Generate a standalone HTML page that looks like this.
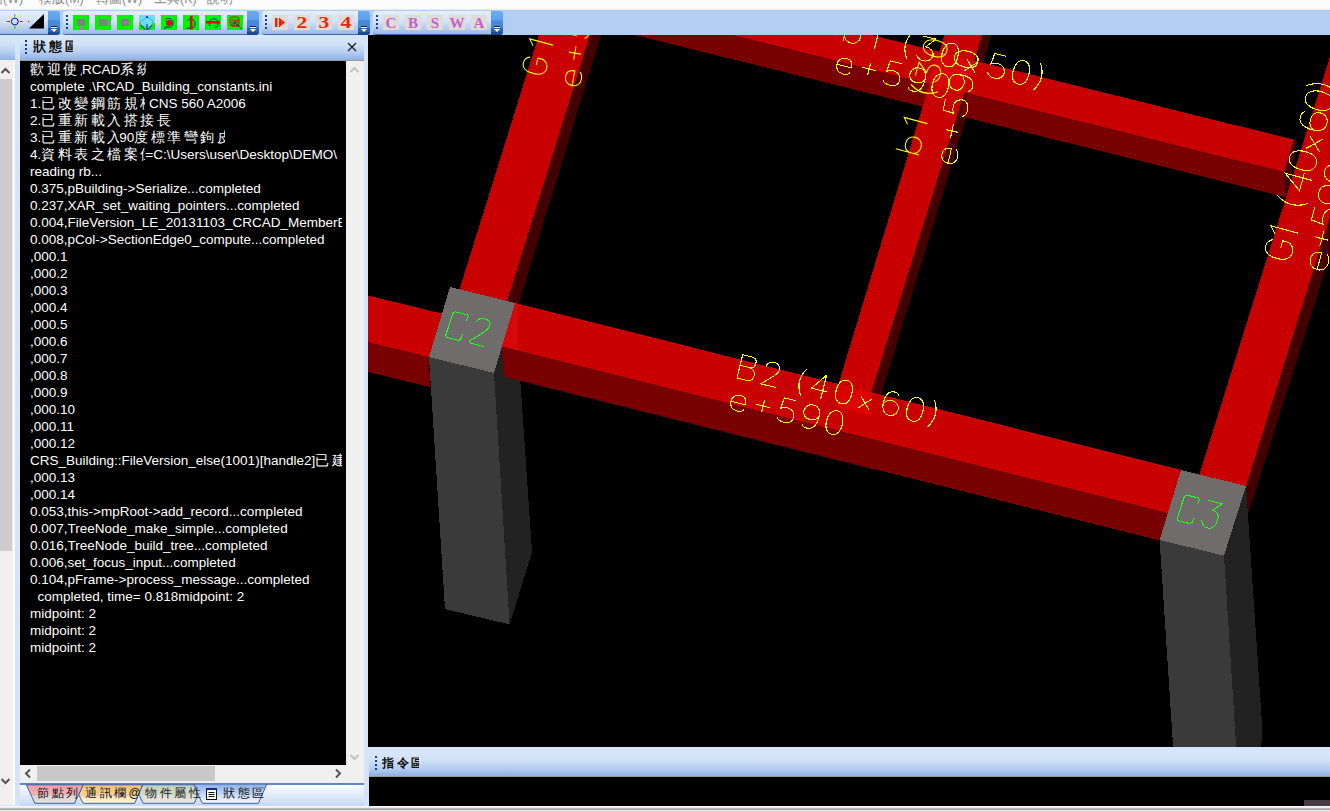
<!DOCTYPE html>
<html><head><meta charset="utf-8">
<style>
*{box-sizing:border-box}
html,body{margin:0;padding:0}
body{width:1330px;height:811px;overflow:hidden;position:relative;background:#d6e4f8;font-family:"Liberation Sans",sans-serif}
.a{position:absolute}
#menubar{left:0;top:0;width:1330px;height:10px;background:#fcfcfc;border-bottom:1px solid #ecebe8;overflow:hidden}
#menubar span{position:absolute;top:-9px;font-size:12.5px;color:#8c8c8c;white-space:nowrap}
#band{left:0;top:10px;width:1330px;height:25px;background:#b4cdf3}
.tb{position:absolute;top:1px;height:24px;border-radius:3px 0 0 3px;background:linear-gradient(#e4eefc 0%,#d2e2f8 45%,#b6cdf0 75%,#9ab8e6 100%);border-bottom:1px solid #3f66a6}
.dd{position:absolute;top:1px;height:24px;width:12px;border-radius:0 3px 3px 0;background:linear-gradient(#6aaaf0 0%,#5ea0ea 38%,#4a8cdc 40%,#4688d8 68%,#2a66b6 70%,#2a62b0 88%,#1a4890 90%,#1a4890 100%)}
.dd:after{content:"";position:absolute;left:3px;top:16px;width:6px;height:1px;background:#fff;box-shadow:0 -1px 0 0 #102040}
.dd i{position:absolute;left:3px;top:18px;width:0;height:0;border-left:3px solid transparent;border-right:3px solid transparent;border-top:3px solid #fff}
.grip{position:absolute;top:5px;width:2px;height:15px;background:repeating-linear-gradient(#1a3f8a 0 2px,transparent 2px 4px)}
.ic{position:absolute;top:4px;width:16px;height:15px}
.gb{background:#00f800}
.gy{background:#dcdcdc;font-family:"Liberation Serif",serif;font-weight:bold;text-align:center;line-height:15px;font-size:16px}
.hdr{background:linear-gradient(#d8e6f9 0%,#d2e2f8 35%,#b4cdf0 70%,#8eb2e6 100%)}
.grip2{width:2px;height:15px;background:repeating-linear-gradient(#1a3f8a 0 2px,transparent 2px 4px)}
.ln{height:17px;line-height:17px;font-size:13.5px;color:#fff;white-space:pre}
.cj{display:inline-block;overflow:hidden;vertical-align:top;white-space:nowrap;font-size:14px;letter-spacing:2.5px}
.tabt{font-size:12px;line-height:15px;color:#111;white-space:nowrap;letter-spacing:2.5px}
.dig{width:16px;height:15px;text-align:center;font-family:"Liberation Serif",serif;font-weight:bold;font-size:16px;line-height:16px;color:#f02400;transform:scaleX(1.35)}
.let{width:16px;height:15px;text-align:center;font-family:"Liberation Serif",serif;font-weight:bold;font-size:15px;line-height:16px;color:#c860c8}
</style></head><body>

<div id="menubar" class="a">
<span style="left:-10px">圖(W)</span>
<span style="left:39px">模版(M)</span>
<span style="left:96px">轉圖(W)</span>
<span style="left:154px">工具(K)</span>
<span style="left:207px">說明</span>
</div>

<div id="band" class="a">
  <!-- toolbar 1 -->
  <div class="tb" style="left:0;width:49px;border-radius:0"></div>
  <div class="dd" style="left:48px"><i></i></div>
  <!-- toolbar 2 -->
  <div class="tb" style="left:63px;width:185px"></div>
  <div class="dd" style="left:247px"><i></i></div>
  <div class="grip" style="left:66px"></div>
  <!-- toolbar 3 -->
  <div class="tb" style="left:262px;width:97px"></div>
  <div class="dd" style="left:358px"><i></i></div>
  <div class="grip" style="left:265px"></div>
  <!-- toolbar 4 -->
  <div class="tb" style="left:373px;width:119px"></div>
  <div class="dd" style="left:491px"><i></i></div>
  <div class="grip" style="left:376px"></div>

  <!-- tb1 icons -->
  <svg class="a" style="left:5px;top:0px" width="40" height="21">
   <circle cx="9.8" cy="11.5" r="3.4" fill="none" stroke="#0000e0" stroke-width="1"/>
   <path d="M9.8,4V7M9.8,16V19" stroke="#00d000" stroke-width="1"/>
   <path d="M2,11.5H5M14.5,11.5H17.5" stroke="#f00000" stroke-width="1"/>
   <path d="M3.8,5.5L6.8,8.5M15.8,5.5L12.8,8.5M3.8,17.5L6.8,14.5M15.8,17.5L12.8,14.5" stroke="#f0e000" stroke-width="1"/>
   <rect x="23" y="11" width="1.2" height="1.2" fill="#e00000"/>
   <polygon points="24,18.5 39,4 39,18.5" fill="#000"/>
  </svg>
  <!-- tb2 icons -->
  <svg class="a" style="left:73px;top:5px" width="172" height="15">
   <g>
    <rect x="0" y="0" width="16" height="15" fill="#00f400"/>
    <rect x="4" y="4" width="8" height="7" fill="#808080"/><rect x="7" y="12" width="3" height="3" fill="#d060d0"/>
   </g>
   <g transform="translate(22,0)">
    <rect x="0" y="0" width="16" height="15" fill="#00f400"/>
    <rect x="4" y="4" width="8" height="7" fill="#808080"/><circle cx="14" cy="8" r="1.8" fill="#d060d0"/>
   </g>
   <g transform="translate(44,0)">
    <rect x="0" y="0" width="16" height="15" fill="#00f400"/>
    <rect x="4" y="4" width="8" height="7" fill="#808080"/><circle cx="8" cy="7.5" r="1.5" fill="#d060d0"/>
   </g>
   <g transform="translate(66,0)">
    <rect x="0" y="0" width="16" height="15" fill="#00f400"/>
    <rect x="0" y="0" width="16" height="8" fill="#60e4f4"/>
    <path d="M1,7 L8,2 L14,6 L13,10 L8,13 L2,10 Z" fill="#60e4f4" stroke="#909090" stroke-width="0.9"/>
    <path d="M2,10 L6,15 M8,9 L8,15 M13,10 L9,15" stroke="#0010c0" stroke-width="1"/>
    <rect x="7" y="1.5" width="2" height="1.5" fill="#0010c0"/>
   </g>
   <g transform="translate(88,0)">
    <rect x="0" y="0" width="16" height="15" fill="#00f400"/>
    <path d="M4,5 A4.5,4.5 0 1 1 6,12 L4,12 L4,14" fill="none" stroke="#0018c0" stroke-width="1"/>
    <circle cx="8" cy="8" r="3" fill="#f00000"/>
   </g>
   <g transform="translate(110,0)">
    <rect x="0" y="0" width="16" height="15" fill="#00f400"/>
    <path d="M4,6 A4.5,4.5 0 1 1 7,13 L4,13 L4,14" fill="none" stroke="#0018c0" stroke-width="1"/>
    <rect x="7" y="1" width="2.5" height="13.5" fill="#f00000"/>
   </g>
   <g transform="translate(132,0)">
    <rect x="0" y="0" width="16" height="15" fill="#00f400"/>
    <path d="M5,11 A4.5,4.5 0 1 1 13,9 L12,12 L10,12" fill="none" stroke="#0018c0" stroke-width="1"/>
    <rect x="1" y="6" width="14" height="2.5" fill="#f00000"/>
   </g>
   <g transform="translate(154,0)">
    <rect x="0" y="0" width="16" height="15" fill="#00f400"/>
    <rect x="3" y="2" width="9" height="9" rx="2" fill="none" stroke="#f00000" stroke-width="1"/>
    <rect x="5" y="5" width="6" height="6" fill="none" stroke="#f00000" stroke-width="1"/>
    <path d="M7,7 L15,14 M7,7 L7,10 M7,7 L10,7" stroke="#0018c0" stroke-width="1"/>
   </g>
  </svg>
  <!-- tb3 icons -->
  <svg class="a" style="left:272px;top:5px" width="84" height="15">
   <rect x="0" y="0" width="16" height="15" fill="#dedbd8"/>
   <rect x="3" y="3" width="2.5" height="9" fill="#f02000"/><polygon points="7,2.5 13,7.5 7,12.5" fill="#f02000"/>
   <rect x="22" y="0" width="16" height="15" fill="#dedbd8"/>
   <rect x="44" y="0" width="16" height="15" fill="#dedbd8"/>
   <rect x="66" y="0" width="16" height="15" fill="#dedbd8"/>
  </svg>
  <div class="a dig" style="left:294px;top:5px">2</div>
  <div class="a dig" style="left:316px;top:5px">3</div>
  <div class="a dig" style="left:338px;top:5px">4</div>
  <!-- tb4 icons -->
  <svg class="a" style="left:383px;top:5px" width="104" height="15">
   <rect x="0" y="0" width="16" height="15" fill="#dedbd8"/>
   <rect x="22" y="0" width="16" height="15" fill="#dedbd8"/>
   <rect x="44" y="0" width="16" height="15" fill="#dedbd8"/>
   <rect x="66" y="0" width="16" height="15" fill="#dedbd8"/>
   <rect x="88" y="0" width="16" height="15" fill="#dedbd8"/>
  </svg>
  <div class="a let" style="left:383px;top:5px">C</div>
  <div class="a let" style="left:405px;top:5px">B</div>
  <div class="a let" style="left:427px;top:5px">S</div>
  <div class="a let" style="left:449px;top:5px">W</div>
  <div class="a let" style="left:471px;top:5px">A</div>
</div>

<!-- left dock -->
<div id="dock" class="a" style="left:0;top:35px;width:368px;height:771px;background:#d6e4f8"></div>

<!-- left collapsed panel -->
<div class="a hdr" style="left:0;top:35px;width:15px;height:25px"></div>
<div class="a" style="left:0;top:60px;width:13px;height:745px;background:#f0f0f0"></div>
<div class="a" style="left:0;top:79px;width:12px;height:472px;background:#cdcdcd"></div>
<div class="a" style="left:13px;top:60px;width:2px;height:745px;background:#fbfbfb"></div>
<svg class="a" style="left:0px;top:67px" width="11" height="8"><path d="M1.5,6 L5.5,2 L9.5,6" stroke="#555" stroke-width="2" fill="none"/></svg>
<svg class="a" style="left:0px;top:777px" width="11" height="8"><path d="M1.5,2 L5.5,6 L9.5,2" stroke="#555" stroke-width="2" fill="none"/></svg>

<!-- status panel -->
<div class="a hdr" style="left:20px;top:35px;width:344px;height:26px;border-bottom:1px solid #9a9a9a"></div>
<div class="a grip2" style="left:25px;top:40px"></div>
<div class="a" style="left:33px;top:39px;font-size:13px;font-weight:bold;color:#111;line-height:16px;letter-spacing:3px;width:40px;overflow:hidden;white-space:nowrap">狀態區</div>
<svg class="a" style="left:347px;top:42px" width="10" height="10"><path d="M1,1 L9,9 M9,1 L1,9" stroke="#222" stroke-width="1.4"/></svg>
<div class="a" id="con" style="left:20px;top:61px;width:326px;height:704px;background:#000;overflow:hidden">
<div style="position:absolute;left:10px;top:0;width:312px;overflow:hidden;padding-top:0">
<div class="ln"><span class="cj" style="width:52px">歡迎使用</span>RCAD<span class="cj" style="width:26px">系統</span></div>
<div class="ln">complete&#32;.\RCAD_Building_constants.ini</div>
<div class="ln">1.<span class="cj" style="width:104px">已改變鋼筋規格為</span>&#32;CNS&#32;560&#32;A2006</div>
<div class="ln">2.<span class="cj" style="width:130px">已重新載入搭接長度表</span></div>
<div class="ln">3.<span class="cj" style="width:78px">已重新載入梁</span>90<span class="cj" style="width:91px">度標準彎鉤皮長</span></div>
<div class="ln">4.<span class="cj" style="width:104px">資料表之檔案位置</span>=C:\Users\user\Desktop\DEMO\</div>
<div class="ln">reading&#32;rb...</div>
<div class="ln">0.375,pBuilding-&gt;Serialize...completed</div>
<div class="ln">0.237,XAR_set_waiting_pointers...completed</div>
<div class="ln">0.004,FileVersion_LE_20131103_CRCAD_MemberB</div>
<div class="ln">0.008,pCol-&gt;SectionEdge0_compute...completed</div>
<div class="ln">,000.1</div>
<div class="ln">,000.2</div>
<div class="ln">,000.3</div>
<div class="ln">,000.4</div>
<div class="ln">,000.5</div>
<div class="ln">,000.6</div>
<div class="ln">,000.7</div>
<div class="ln">,000.8</div>
<div class="ln">,000.9</div>
<div class="ln">,000.10</div>
<div class="ln">,000.11</div>
<div class="ln">,000.12</div>
<div class="ln">CRS_Building::FileVersion_else(1001)[handle2]<span class="cj" style="width:39px">已建構</span></div>
<div class="ln">,000.13</div>
<div class="ln">,000.14</div>
<div class="ln">0.053,this-&gt;mpRoot-&gt;add_record...completed</div>
<div class="ln">0.007,TreeNode_make_simple...completed</div>
<div class="ln">0.016,TreeNode_build_tree...completed</div>
<div class="ln">0.006,set_focus_input...completed</div>
<div class="ln">0.104,pFrame-&gt;process_message...completed</div>
<div class="ln">&#32;&#32;completed,&#32;time=&#32;0.818midpoint:&#32;2</div>
<div class="ln">midpoint:&#32;2</div>
<div class="ln">midpoint:&#32;2</div>
<div class="ln">midpoint:&#32;2</div>
</div></div>
<div class="a" style="left:346px;top:61px;width:18px;height:704px;background:#f0f0f0"></div>
<svg class="a" style="left:349px;top:66px" width="11" height="8"><path d="M1.5,6 L5.5,2 L9.5,6" stroke="#c8c3c3" stroke-width="2" fill="none"/></svg>
<svg class="a" style="left:349px;top:753px" width="11" height="8"><path d="M1.5,2 L5.5,6 L9.5,2" stroke="#c8c3c3" stroke-width="2" fill="none"/></svg>
<div class="a" style="left:20px;top:765px;width:344px;height:18px;background:#f0f0f0"></div>
<div class="a" style="left:37px;top:766px;width:178px;height:15px;background:#c8c8c8"></div>
<svg class="a" style="left:24px;top:768px" width="8" height="11"><path d="M6,1.5 L2,5.5 L6,9.5" stroke="#555" stroke-width="2" fill="none"/></svg>
<svg class="a" style="left:334px;top:768px" width="8" height="11"><path d="M2,1.5 L6,5.5 L2,9.5" stroke="#555" stroke-width="2" fill="none"/></svg>
<!-- tab strip -->
<div class="a" style="left:20px;top:783px;width:344px;height:23px;background:linear-gradient(#ffffff,#c6d9f4)"></div>
<div class="a" style="left:20px;top:783px;width:344px;height:2px;background:#4a7ac8;opacity:.9"></div>
<svg class="a" style="left:20px;top:784px" width="344" height="22">
<defs>
<linearGradient id="tp" x1="0" y1="0" x2="0" y2="1"><stop offset="0" stop-color="#f19ea6"/><stop offset="0.55" stop-color="#ecb4b4"/><stop offset="0.62" stop-color="#ded6d6"/><stop offset="1" stop-color="#e4dede"/></linearGradient>
<linearGradient id="to" x1="0" y1="0" x2="0" y2="1"><stop offset="0" stop-color="#f4c07a"/><stop offset="0.5" stop-color="#f6d090"/><stop offset="0.58" stop-color="#f0c8c0"/><stop offset="0.66" stop-color="#fde9ba"/><stop offset="1" stop-color="#fff5cf"/></linearGradient>
<linearGradient id="tg" x1="0" y1="0" x2="0" y2="1"><stop offset="0" stop-color="#c6d2bd"/><stop offset="0.55" stop-color="#d2dac8"/><stop offset="0.62" stop-color="#e2e0d8"/><stop offset="1" stop-color="#e8e8e0"/></linearGradient>
<linearGradient id="tb2" x1="0" y1="0" x2="0" y2="1"><stop offset="0" stop-color="#8aaee6"/><stop offset="0.5" stop-color="#c0d6f4"/><stop offset="1" stop-color="#f8fbff"/></linearGradient>
</defs>
<polygon points="174.2,0 246.8,0 238.4,19.3 182.6,19.3 177.9,10.8" fill="url(#tb2)" stroke="#3a62a8" stroke-width="1"/>
<polygon points="122.6,0.8 174.2,0.8 177.9,10.8 174.2,19.3 123.2,19.3 118.4,9.8" fill="url(#tg)" stroke="#3a62a8" stroke-width="1"/>
<polygon points="63.2,0.8 122.6,0.8 114.7,19.3 63.2,19.3 58.6,10.5" fill="url(#to)" stroke="#3a62a8" stroke-width="1"/>
<polygon points="6.3,0.8 63.2,0.8 54.6,19.3 14.9,19.3" fill="url(#tp)" stroke="#3a62a8" stroke-width="1"/>
</svg>
<div class="a tabt" style="left:37px;top:786px">節點列</div>
<div class="a tabt" style="left:85px;top:786px">通訊欄@</div>
<div class="a tabt" style="left:145px;top:786px;color:#222">物件屬性</div>
<svg class="a" style="left:206px;top:788px" width="11" height="12"><rect x="0.5" y="0.5" width="10" height="11" fill="#fff" stroke="#111"/><rect x="0" y="0" width="11" height="2" fill="#1a2a80"/><path d="M2.5,4.5H8.5M2.5,6.5H8.5M2.5,8.5H8.5" stroke="#111"/></svg>
<div class="a tabt" style="left:223px;top:786px">狀態區</div>

<!-- 3D view -->
<svg class="a" style="left:368px;top:35px" width="962" height="712" viewBox="368 35 962 712" shape-rendering="crispEdges">
<rect x="368" y="35" width="962" height="712" fill="#000"/>
<!-- b1v dark -->
<polygon fill="#420000" points="983.5,30 993,30 879.4,400 868.85,400"/>
<!-- top beam dark -->
<polygon fill="#780000" points="724,32.7 1283.9,171.8 1285.1,197 630,33.7"/>
<polygon fill="#420000" points="964.95,88 969,88 960,118 956.3,118"/>
<!-- top beam red -->
<polygon fill="#c80000" points="860,32.2 1293.8,139.7 1283.9,171.8 724,32.7"/>
<!-- top beam end face -->
<polygon fill="#420000" points="1293.8,139.7 1297,141 1287,197 1285.1,197 1283.9,171.8"/>
<!-- b1v red -->
<polygon fill="#c80000" points="946,30 983.5,30 868.85,400 833.7,400"/>
<!-- G1 left -->
<polygon fill="#420000" points="591.4,30 602.4,30 516.8,310 504.3,310"/>
<polygon fill="#c80000" points="540.5,30 591.4,30 504.3,310 456.2,300"/>
<!-- B2 left -->
<polygon fill="#c80000" points="360,293.6 442,313.6 429,357 360,340"/>
<polygon fill="#780000" points="360,340 429,357 430,387 360,370"/>
<!-- G1 right -->
<polygon fill="#420000" points="1388,30 1401.4,30 1248,514 1246,486"/>
<polygon fill="#c80000" points="1338.4,30 1388,30 1244.8,490 1197.7,480"/>
<!-- C2 right face -->
<polygon fill="#222222" points="494,373 515,303 532,552 509.6,624.4"/>
<!-- B2 right -->
<polygon fill="#c80000" points="515,303 1181,470 1168,513 501.6,346.4"/>
<polygon fill="#780000" points="501.6,346.4 1168,513 1160,540.5 504,376.8"/>
<!-- C2 top & front -->
<polygon fill="#716c6c" points="450,287 515,303 494,373 429,357"/>
<polygon fill="#3a3a3a" points="429,357 494,373 509.6,624.4 445,609"/>
<!-- C3 -->
<polygon fill="#222222" points="1224,555.6 1246,486 1262,724 1261,760 1237,760"/>
<polygon fill="#3a3a3a" points="1159.6,540 1224,555.6 1237,760 1174,760"/>
<polygon fill="#716c6c" points="1181,470 1246,486 1224,555.6 1159.6,540"/>
<!-- z-fight patches -->
<polygon fill="#d80606" points="939.2,51.9 974.1,60.5 964,93.2 928.6,84.4"/>
<polygon fill="#dc0000" points="835.9,383.3 871.1,392.2 871.8,415.9 836.7,407"/>
<polygon fill="#d40808" points="515,303 518,304 518,350 502,346"/>
<!--LABELS-->
<g transform="translate(737.0,378.0) rotate(13.8) scale(1.000)" fill="none" stroke="#ffff00" stroke-width="1.00" shape-rendering="crispEdges"><path transform="translate(0.0,0) scale(1.15,1)" d="M0,0 L0,-24 L8,-24 C11,-24 13,-22 13,-18.5 C13,-15 11,-13 8,-13 L0,-13 M8,-13 C12,-13 14,-10 14,-6.5 C14,-2.5 12,0 8,0 L0,0"/><path transform="translate(24.4,0) scale(1.15,1)" d="M1,-18 C1,-22 4,-24 7,-24 C11,-24 13,-21 13,-18 C13,-14 9,-10 0,0 L14,0"/><path transform="translate(56.8,0) scale(1.15,1)" d="M8,-26 Q0,-12 8,2"/><path transform="translate(74.8,0) scale(1.15,1)" d="M10,0 L10,-24 L0,-8 L14,-8"/><path transform="translate(99.2,0) scale(1.15,1)" d="M7,-24 C2,-24 0,-18 0,-12 C0,-5 2,0 7,0 C12,0 14,-5 14,-12 C14,-18 12,-24 7,-24 Z"/><path transform="translate(123.6,0) scale(1.15,1)" d="M1,-12 L11,0 M11,-12 L1,0"/><path transform="translate(148.0,0) scale(1.15,1)" d="M12,-21 C11,-23 9,-24 7,-24 C2,-24 0,-18 0,-11 C0,-4 3,0 7,0 C11,0 14,-3 14,-8 C14,-12 11,-15 7,-15 C3,-15 0,-12 0,-8"/><path transform="translate(172.4,0) scale(1.15,1)" d="M7,-24 C2,-24 0,-18 0,-12 C0,-5 2,0 7,0 C12,0 14,-5 14,-12 C14,-18 12,-24 7,-24 Z"/><path transform="translate(196.8,0) scale(1.15,1)" d="M0,-26 Q8,-12 0,2"/></g>
<g transform="translate(729.0,409.0) rotate(13.8) scale(1.000)" fill="none" stroke="#ffff00" stroke-width="1.00" shape-rendering="crispEdges"><path transform="translate(0.0,0) scale(1.15,1)" d="M0,-8 L13,-8 C13,-13 11,-16 7,-16 C3,-16 0,-13 0,-8 C0,-3 3,0 7,0 C10,0 12,-1 13,-3"/><path transform="translate(24.4,0) scale(1.15,1)" d="M7,-17 L7,-5 M1,-11 L13,-11"/><path transform="translate(48.8,0) scale(1.15,1)" d="M12,-24 L2,-24 L1,-13 C3,-15 5,-15 7,-15 C11,-15 14,-12 14,-7 C14,-3 11,0 7,0 C4,0 1,-1 0,-4"/><path transform="translate(73.2,0) scale(1.15,1)" d="M14,-16 C14,-12 11,-9 7,-9 C3,-9 0,-12 0,-16 C0,-21 3,-24 7,-24 C11,-24 14,-21 14,-14 C14,-5 11,0 6,0 C4,0 2,-1 1,-3"/><path transform="translate(97.6,0) scale(1.15,1)" d="M7,-24 C2,-24 0,-18 0,-12 C0,-5 2,0 7,0 C12,0 14,-5 14,-12 C14,-18 12,-24 7,-24 Z"/></g>
<g transform="translate(843.0,41.0) rotate(13.8) scale(1.000)" fill="none" stroke="#ffff00" stroke-width="1.00" shape-rendering="crispEdges"><path transform="translate(0.0,0) scale(1.15,1)" d="M0,-24 L0,0 M0,-10 C1,-14 4,-16 7,-16 C11,-16 14,-13 14,-8 C14,-3 11,0 7,0 C4,0 1,-2 0,-6"/><path transform="translate(24.4,0) scale(1.15,1)" d="M2,-19 L7,-24 L7,0"/><path transform="translate(56.8,0) scale(1.15,1)" d="M8,-26 Q0,-12 8,2"/><path transform="translate(74.8,0) scale(1.15,1)" d="M1,-24 L13,-24 L6,-14 C10,-14 14,-12 14,-7 C14,-2 10,0 7,0 C3,0 1,-2 0,-4"/><path transform="translate(99.2,0) scale(1.15,1)" d="M7,-24 C2,-24 0,-18 0,-12 C0,-5 2,0 7,0 C12,0 14,-5 14,-12 C14,-18 12,-24 7,-24 Z"/><path transform="translate(123.6,0) scale(1.15,1)" d="M1,-12 L11,0 M11,-12 L1,0"/><path transform="translate(148.0,0) scale(1.15,1)" d="M12,-24 L2,-24 L1,-13 C3,-15 5,-15 7,-15 C11,-15 14,-12 14,-7 C14,-3 11,0 7,0 C4,0 1,-1 0,-4"/><path transform="translate(172.4,0) scale(1.15,1)" d="M7,-24 C2,-24 0,-18 0,-12 C0,-5 2,0 7,0 C12,0 14,-5 14,-12 C14,-18 12,-24 7,-24 Z"/><path transform="translate(196.8,0) scale(1.15,1)" d="M0,-26 Q8,-12 0,2"/></g>
<g transform="translate(835.0,72.0) rotate(13.8) scale(1.000)" fill="none" stroke="#ffff00" stroke-width="1.00" shape-rendering="crispEdges"><path transform="translate(0.0,0) scale(1.15,1)" d="M0,-8 L13,-8 C13,-13 11,-16 7,-16 C3,-16 0,-13 0,-8 C0,-3 3,0 7,0 C10,0 12,-1 13,-3"/><path transform="translate(24.4,0) scale(1.15,1)" d="M7,-17 L7,-5 M1,-11 L13,-11"/><path transform="translate(48.8,0) scale(1.15,1)" d="M12,-24 L2,-24 L1,-13 C3,-15 5,-15 7,-15 C11,-15 14,-12 14,-7 C14,-3 11,0 7,0 C4,0 1,-1 0,-4"/><path transform="translate(73.2,0) scale(1.15,1)" d="M14,-16 C14,-12 11,-9 7,-9 C3,-9 0,-12 0,-16 C0,-21 3,-24 7,-24 C11,-24 14,-21 14,-14 C14,-5 11,0 6,0 C4,0 2,-1 1,-3"/><path transform="translate(97.6,0) scale(1.15,1)" d="M7,-24 C2,-24 0,-18 0,-12 C0,-5 2,0 7,0 C12,0 14,-5 14,-12 C14,-18 12,-24 7,-24 Z"/></g>
<g transform="translate(919.0,155.0) rotate(-75.0) scale(1.000)" fill="none" stroke="#ffff00" stroke-width="1.00" shape-rendering="crispEdges"><path transform="translate(0.0,0) scale(1.15,1)" d="M0,-24 L0,0 M0,-10 C1,-14 4,-16 7,-16 C11,-16 14,-13 14,-8 C14,-3 11,0 7,0 C4,0 1,-2 0,-6"/><path transform="translate(24.4,0) scale(1.15,1)" d="M2,-19 L7,-24 L7,0"/><path transform="translate(56.8,0) scale(1.15,1)" d="M8,-26 Q0,-12 8,2"/><path transform="translate(74.8,0) scale(1.15,1)" d="M1,-24 L13,-24 L6,-14 C10,-14 14,-12 14,-7 C14,-2 10,0 7,0 C3,0 1,-2 0,-4"/><path transform="translate(99.2,0) scale(1.15,1)" d="M7,-24 C2,-24 0,-18 0,-12 C0,-5 2,0 7,0 C12,0 14,-5 14,-12 C14,-18 12,-24 7,-24 Z"/><path transform="translate(123.6,0) scale(1.15,1)" d="M1,-12 L11,0 M11,-12 L1,0"/><path transform="translate(148.0,0) scale(1.15,1)" d="M12,-24 L2,-24 L1,-13 C3,-15 5,-15 7,-15 C11,-15 14,-12 14,-7 C14,-3 11,0 7,0 C4,0 1,-1 0,-4"/><path transform="translate(172.4,0) scale(1.15,1)" d="M7,-24 C2,-24 0,-18 0,-12 C0,-5 2,0 7,0 C12,0 14,-5 14,-12 C14,-18 12,-24 7,-24 Z"/><path transform="translate(196.8,0) scale(1.15,1)" d="M0,-26 Q8,-12 0,2"/></g>
<g transform="translate(956.0,165.0) rotate(-78.0) scale(1.000)" fill="none" stroke="#ffff00" stroke-width="1.00" shape-rendering="crispEdges"><path transform="translate(0.0,0) scale(1.15,1)" d="M0,-8 L13,-8 C13,-13 11,-16 7,-16 C3,-16 0,-13 0,-8 C0,-3 3,0 7,0 C10,0 12,-1 13,-3"/><path transform="translate(24.4,0) scale(1.15,1)" d="M7,-17 L7,-5 M1,-11 L13,-11"/><path transform="translate(48.8,0) scale(1.15,1)" d="M12,-24 L2,-24 L1,-13 C3,-15 5,-15 7,-15 C11,-15 14,-12 14,-7 C14,-3 11,0 7,0 C4,0 1,-1 0,-4"/><path transform="translate(73.2,0) scale(1.15,1)" d="M14,-16 C14,-12 11,-9 7,-9 C3,-9 0,-12 0,-16 C0,-21 3,-24 7,-24 C11,-24 14,-21 14,-14 C14,-5 11,0 6,0 C4,0 2,-1 1,-3"/><path transform="translate(97.6,0) scale(1.15,1)" d="M7,-24 C2,-24 0,-18 0,-12 C0,-5 2,0 7,0 C12,0 14,-5 14,-12 C14,-18 12,-24 7,-24 Z"/></g>
<g transform="translate(544.5,76.5) rotate(-75.0) scale(1.000)" fill="none" stroke="#ffff00" stroke-width="1.00" shape-rendering="crispEdges"><path transform="translate(0.0,0) scale(1.15,1)" d="M13,-19 C12,-22 10,-24 7,-24 C3,-24 0,-20 0,-12 C0,-4 3,0 7,0 C11,0 13,-2 14,-6 L14,-11 L8,-11"/><path transform="translate(24.4,0) scale(1.15,1)" d="M2,-19 L7,-24 L7,0"/><path transform="translate(56.8,0) scale(1.15,1)" d="M8,-26 Q0,-12 8,2"/><path transform="translate(74.8,0) scale(1.15,1)" d="M10,0 L10,-24 L0,-8 L14,-8"/><path transform="translate(99.2,0) scale(1.15,1)" d="M7,-24 C2,-24 0,-18 0,-12 C0,-5 2,0 7,0 C12,0 14,-5 14,-12 C14,-18 12,-24 7,-24 Z"/><path transform="translate(123.6,0) scale(1.15,1)" d="M1,-12 L11,0 M11,-12 L1,0"/><path transform="translate(148.0,0) scale(1.15,1)" d="M12,-21 C11,-23 9,-24 7,-24 C2,-24 0,-18 0,-11 C0,-4 3,0 7,0 C11,0 14,-3 14,-8 C14,-12 11,-15 7,-15 C3,-15 0,-12 0,-8"/><path transform="translate(172.4,0) scale(1.15,1)" d="M7,-24 C2,-24 0,-18 0,-12 C0,-5 2,0 7,0 C12,0 14,-5 14,-12 C14,-18 12,-24 7,-24 Z"/><path transform="translate(196.8,0) scale(1.15,1)" d="M0,-26 Q8,-12 0,2"/></g>
<g transform="translate(580.0,87.0) rotate(-80.0) scale(1.000)" fill="none" stroke="#ffff00" stroke-width="1.00" shape-rendering="crispEdges"><path transform="translate(0.0,0) scale(1.15,1)" d="M0,-8 L13,-8 C13,-13 11,-16 7,-16 C3,-16 0,-13 0,-8 C0,-3 3,0 7,0 C10,0 12,-1 13,-3"/><path transform="translate(24.4,0) scale(1.15,1)" d="M7,-17 L7,-5 M1,-11 L13,-11"/><path transform="translate(48.8,0) scale(1.15,1)" d="M12,-24 L2,-24 L1,-13 C3,-15 5,-15 7,-15 C11,-15 14,-12 14,-7 C14,-3 11,0 7,0 C4,0 1,-1 0,-4"/><path transform="translate(73.2,0) scale(1.15,1)" d="M14,-16 C14,-12 11,-9 7,-9 C3,-9 0,-12 0,-16 C0,-21 3,-24 7,-24 C11,-24 14,-21 14,-14 C14,-5 11,0 6,0 C4,0 2,-1 1,-3"/><path transform="translate(97.6,0) scale(1.15,1)" d="M7,-24 C2,-24 0,-18 0,-12 C0,-5 2,0 7,0 C12,0 14,-5 14,-12 C14,-18 12,-24 7,-24 Z"/></g>
<g transform="translate(1290.0,262.0) rotate(-75.0) scale(1.150)" fill="none" stroke="#ffff00" stroke-width="0.87" shape-rendering="crispEdges"><path transform="translate(0.0,0) scale(1.15,1)" d="M13,-19 C12,-22 10,-24 7,-24 C3,-24 0,-20 0,-12 C0,-4 3,0 7,0 C11,0 13,-2 14,-6 L14,-11 L8,-11"/><path transform="translate(18.0,0) scale(1.15,1)" d="M2,-19 L7,-24 L7,0"/><path transform="translate(44.0,0) scale(1.15,1)" d="M8,-26 Q0,-12 8,2"/><path transform="translate(62.0,0) scale(1.15,1)" d="M10,0 L10,-24 L0,-8 L14,-8"/><path transform="translate(80.0,0) scale(1.15,1)" d="M7,-24 C2,-24 0,-18 0,-12 C0,-5 2,0 7,0 C12,0 14,-5 14,-12 C14,-18 12,-24 7,-24 Z"/><path transform="translate(98.0,0) scale(1.15,1)" d="M1,-12 L11,0 M11,-12 L1,0"/><path transform="translate(116.0,0) scale(1.15,1)" d="M12,-21 C11,-23 9,-24 7,-24 C2,-24 0,-18 0,-11 C0,-4 3,0 7,0 C11,0 14,-3 14,-8 C14,-12 11,-15 7,-15 C3,-15 0,-12 0,-8"/><path transform="translate(134.0,0) scale(1.15,1)" d="M7,-24 C2,-24 0,-18 0,-12 C0,-5 2,0 7,0 C12,0 14,-5 14,-12 C14,-18 12,-24 7,-24 Z"/><path transform="translate(152.0,0) scale(1.15,1)" d="M0,-26 Q8,-12 0,2"/></g>
<g transform="translate(1326.0,272.0) rotate(-75.0) scale(1.150)" fill="none" stroke="#ffff00" stroke-width="0.87" shape-rendering="crispEdges"><path transform="translate(0.0,0) scale(1.15,1)" d="M0,-8 L13,-8 C13,-13 11,-16 7,-16 C3,-16 0,-13 0,-8 C0,-3 3,0 7,0 C10,0 12,-1 13,-3"/><path transform="translate(19.1,0) scale(1.15,1)" d="M7,-17 L7,-5 M1,-11 L13,-11"/><path transform="translate(38.2,0) scale(1.15,1)" d="M12,-24 L2,-24 L1,-13 C3,-15 5,-15 7,-15 C11,-15 14,-12 14,-7 C14,-3 11,0 7,0 C4,0 1,-1 0,-4"/><path transform="translate(57.3,0) scale(1.15,1)" d="M14,-16 C14,-12 11,-9 7,-9 C3,-9 0,-12 0,-16 C0,-21 3,-24 7,-24 C11,-24 14,-21 14,-14 C14,-5 11,0 6,0 C4,0 2,-1 1,-3"/><path transform="translate(76.4,0) scale(1.15,1)" d="M7,-24 C2,-24 0,-18 0,-12 C0,-5 2,0 7,0 C12,0 14,-5 14,-12 C14,-18 12,-24 7,-24 Z"/></g>
<g transform="translate(445.2,337.0) matrix(0.971,0.240,-0.313,0.95,0,0)" fill="none" stroke="#20ff20" stroke-width="1.00" shape-rendering="crispEdges"><path transform="translate(0.0,0)" d="M15,-21 L15.5,-25.5 L14,-27 L2,-27 L0,-25 L0,-1.5 L1.5,0 L14,0 L15.5,-1.5 L15.7,-6.7"/><path transform="translate(25.0,0)" d="M0,-22 C1,-26 3,-27.2 6,-27.2 C11,-27.2 14,-25 14,-21.6 C14,-16 6,-9 -0.5,-2.2 L1,0 L15,0"/></g>
<g transform="translate(1176.5,520.3) matrix(0.971,0.240,-0.313,0.95,0,0)" fill="none" stroke="#20ff20" stroke-width="1.00" shape-rendering="crispEdges"><path transform="translate(0.0,0)" d="M15,-21 L15.5,-25.5 L14,-27 L2,-27 L0,-25 L0,-1.5 L1.5,0 L14,0 L15.5,-1.5 L15.7,-6.7"/><path transform="translate(23.5,0)" d="M0,-27 L15,-27 L7.5,-18.5 C13,-18.5 15.5,-15 15.5,-10 C15.5,-4 13,0 9,0 C5,0 2,-2 0.6,-6"/></g>
<!--/LABELS-->
</svg>

<!-- command area -->
<div class="a" style="left:368px;top:747px;width:962px;height:59px;background:#d6e4f8"></div>
<div class="a hdr" style="left:369px;top:751px;width:961px;height:26px;border-bottom:1px solid #9a9a9a"></div>
<div class="a grip2" style="left:375px;top:756px"></div>
<div class="a" style="left:382px;top:755px;font-size:12px;font-weight:bold;color:#111;line-height:16px;letter-spacing:2.7px;width:37px;overflow:hidden;white-space:nowrap">指令區</div>
<div class="a" style="left:369px;top:777px;width:961px;height:29px;background:#000"></div>

<!-- status -->
<div class="a" style="left:0;top:806px;width:1330px;height:5px;background:#ececec;border-top:1px solid #fafafa"></div>
<div class="a" style="left:0;top:808px;width:1330px;height:2px;background:linear-gradient(#c0c0c0,#9c9c9c)"></div>
<div class="a" style="left:1304px;top:800px;width:26px;height:6px;background:#463c42"></div>

</body></html>
